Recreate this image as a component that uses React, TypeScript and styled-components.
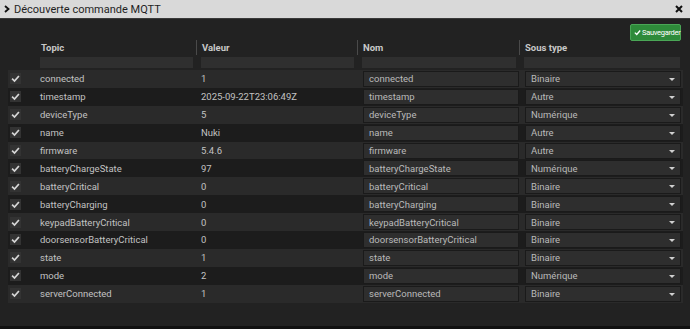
import React from "react";
import styled, { createGlobalStyle } from "styled-components";

const Global = createGlobalStyle`
  html, body { margin: 0; padding: 0; background: #111; }
  body { font-family: Roboto, "Liberation Sans", Arial, sans-serif; }
  * { box-sizing: border-box; }
`;

const Window = styled.div`
  width: 690px;
  height: 329px;
  display: flex;
  flex-direction: column;
  overflow: hidden;
`;

const TitleBar = styled.div`
  height: 19px;
  flex: none;
  background: #d9d9d9;
  border-bottom: 1px solid #3a3a3a;
  display: flex;
  align-items: center;
  padding: 0 4px 0 4px;
  color: #1f1f1f;
  font-size: 11px;
`;

const Chevron = styled.svg`
  width: 6px;
  height: 8px;
  margin-right: 4px;
  flex: none;
`;

const Title = styled.span`
  flex: 1;
`;

const Close = styled.svg`
  width: 8px;
  height: 8px;
  margin-right: 3px;
`;

const Body = styled.div`
  flex: 1;
  background: #222222;
  padding: 5px 7px 0 8px;
  display: flex;
  flex-direction: column;
`;

const Toolbar = styled.div`
  display: flex;
  justify-content: flex-end;
  padding-right: 2px;
  height: 17px;
`;

const SaveButton = styled.button`
  height: 17px;
  width: 51px;
  padding: 0 2px 0 3px;
  background: #2e8b3a;
  border: 1px solid #4aa656;
  border-radius: 2px;
  color: #fff;
  font-family: Roboto, "Liberation Sans", sans-serif;
  font-size: 7.5px;
  letter-spacing: -0.3px;
  display: flex;
  align-items: center;
  gap: 1px;
  white-space: nowrap;
  overflow: visible;

  svg { flex: none; }
`;

const cols = "27px 161px 161px 162px 164px";

const HeaderRow = styled.div`
  display: grid;
  grid-template-columns: ${cols};
  height: 15px;
  margin-top: -1px;
`;

const HeaderCell = styled.div<{ $sep?: boolean }>`
  display: flex;
  align-items: center;
  padding-left: 5px;
  font-size: 9.5px;
  font-weight: 700;
  color: #c8c8c8;
  border-left: ${(p) => (p.$sep ? "1px solid #4a4a4a" : "1px solid transparent")};
`;

const FilterRow = styled.div`
  display: grid;
  grid-template-columns: ${cols};
  height: 11px;
  margin-top: 2px;
  margin-bottom: 2px;
`;

const FilterInput = styled.div`
  margin: 0 3px 0 5px;
  background: #2f2f2f;
`;

const Rows = styled.div`
  display: flex;
  flex-direction: column;
`;

const Row = styled.div<{ $odd: boolean }>`
  display: grid;
  grid-template-columns: ${cols};
  height: 17.9px;
  background: ${(p) => (p.$odd ? "#2a2a2a" : "#1c1c1c")};
  align-items: center;
  font-size: 9.5px;
  color: #c2c2c2;
`;

const CheckCell = styled.div`
  display: flex;
  align-items: center;
  padding-left: 2px;
`;

const CheckBox = styled.div`
  width: 11px;
  height: 11px;
  background: #333;
  display: flex;
  align-items: center;
  justify-content: center;
`;

const TextCell = styled.div`
  padding-left: 5px;
  white-space: nowrap;
  overflow: hidden;
`;

const FieldCell = styled.div`
  padding: 0 0 0 6px;
  display: flex;
`;

const Field = styled.div<{ $width: number }>`
  width: ${(p) => p.$width}px;
  height: 16px;
  background: #2e2e2e;
  border: 1px solid #1a1a1a;
  display: flex;
  align-items: center;
  padding-left: 5px;
  color: #bababa;
  font-size: 9.5px;
  position: relative;
`;

const Caret = styled.span`
  position: absolute;
  right: 5px;
  top: 6px;
  width: 0;
  height: 0;
  border-left: 3px solid transparent;
  border-right: 3px solid transparent;
  border-top: 3px solid #d0d0d0;
`;

const Footer = styled.div`
  height: 3px;
  background: #111;
  flex: none;
`;

const data: [string, string, string][] = [
  ["connected", "1", "Binaire"],
  ["timestamp", "2025-09-22T23:06:49Z", "Autre"],
  ["deviceType", "5", "Numérique"],
  ["name", "Nuki", "Autre"],
  ["firmware", "5.4.6", "Autre"],
  ["batteryChargeState", "97", "Numérique"],
  ["batteryCritical", "0", "Binaire"],
  ["batteryCharging", "0", "Binaire"],
  ["keypadBatteryCritical", "0", "Binaire"],
  ["doorsensorBatteryCritical", "0", "Binaire"],
  ["state", "1", "Binaire"],
  ["mode", "2", "Numérique"],
  ["serverConnected", "1", "Binaire"],
];

const Check = ({ size = 9, color = "#d6d6d6" }: { size?: number; color?: string }) => (
  <svg width={size} height={size} viewBox="0 0 10 10">
    <path d="M1.2 5.2 L3.9 7.8 L8.8 2.2" fill="none" stroke={color} strokeWidth="1.9" />
  </svg>
);

export default function App() {
  return (
    <Window>
      <Global />
      <TitleBar>
        <Chevron viewBox="0 0 6 8">
          <path d="M1 1 L4.5 4 L1 7" fill="none" stroke="#111" strokeWidth="1.8" />
        </Chevron>
        <Title>Découverte commande MQTT</Title>
        <Close viewBox="0 0 8 8">
          <path d="M1 1 L7 7 M7 1 L1 7" stroke="#111" strokeWidth="2" />
        </Close>
      </TitleBar>
      <Body>
        <Toolbar>
          <SaveButton>
            <Check size={7} color="#fff" />
            Sauvegarder
          </SaveButton>
        </Toolbar>
        <HeaderRow>
          <HeaderCell />
          <HeaderCell>Topic</HeaderCell>
          <HeaderCell $sep>Valeur</HeaderCell>
          <HeaderCell $sep>Nom</HeaderCell>
          <HeaderCell $sep>Sous type</HeaderCell>
        </HeaderRow>
        <FilterRow>
          <div />
          <FilterInput />
          <FilterInput />
          <FilterInput />
          <FilterInput />
        </FilterRow>
        <Rows>
          {data.map(([topic, value, type], i) => (
            <Row key={topic} $odd={i % 2 === 0}>
              <CheckCell>
                <CheckBox>
                  <Check />
                </CheckBox>
              </CheckCell>
              <TextCell>{topic}</TextCell>
              <TextCell>{value}</TextCell>
              <FieldCell>
                <Field $width={157}>{topic}</Field>
              </FieldCell>
              <FieldCell>
                <Field $width={156}>
                  {type}
                  <Caret />
                </Field>
              </FieldCell>
            </Row>
          ))}
        </Rows>
      </Body>
      <Footer />
    </Window>
  );
}
